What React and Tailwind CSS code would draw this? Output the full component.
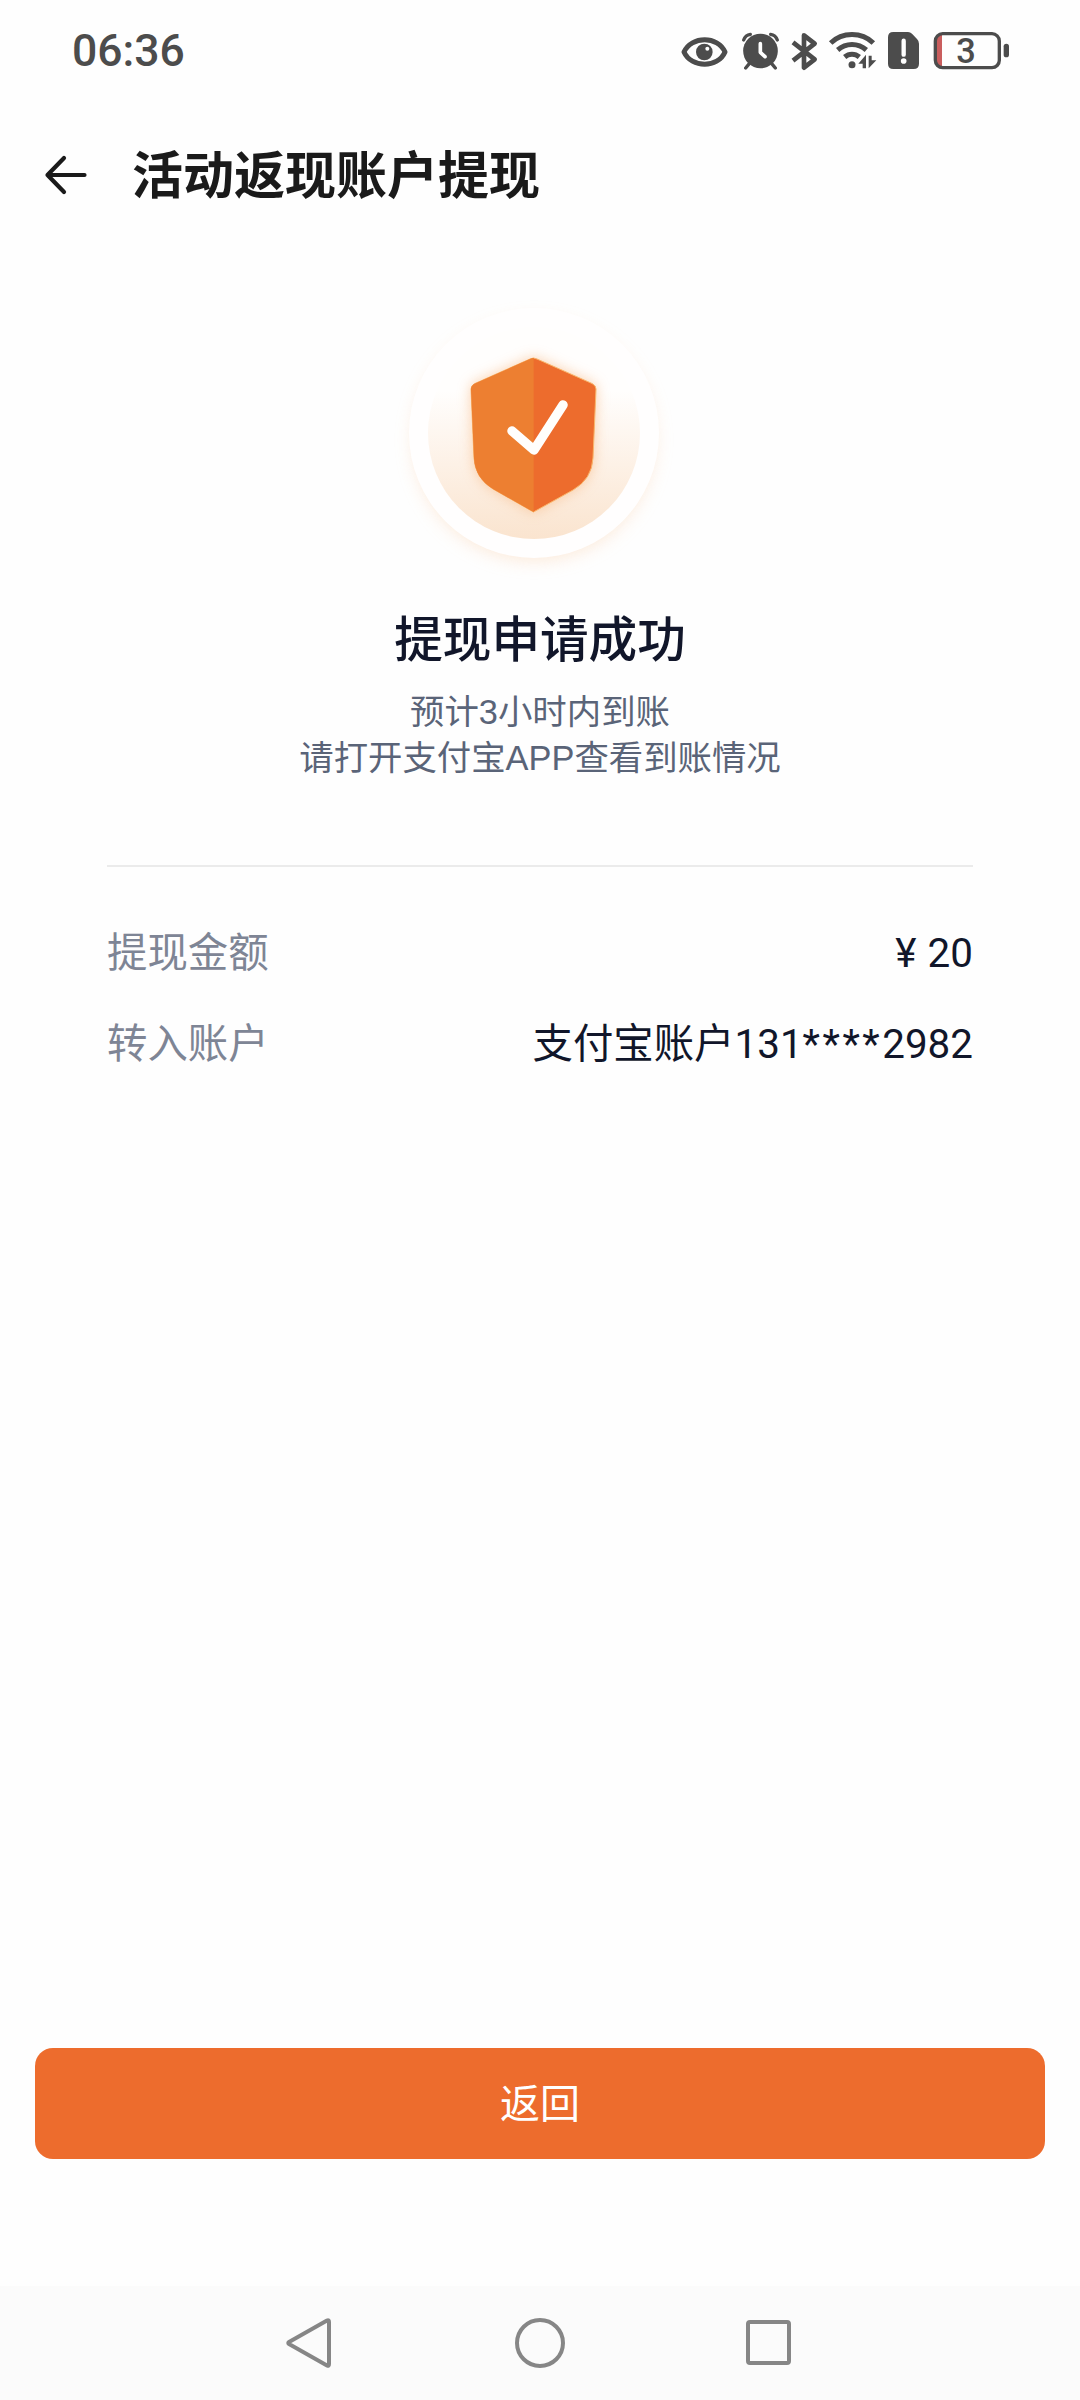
import React from 'react';

const EyeIcon = () => (
  <svg width="50" height="42" viewBox="60 60 150 126">
    <path
      d="M72 126 C94 77 174 77 195 126 C174 175 94 175 72 126 Z"
      fill="none"
      stroke="#4c4c4c"
      strokeWidth="15"
      strokeLinejoin="round"
    />
    <circle cx="133" cy="126" r="25" fill="#4c4c4c" />
    <circle cx="142" cy="116" r="6" fill="#fefefe" />
  </svg>
);

const AlarmIcon = () => (
  <svg width="42" height="42" viewBox="240 60 126 126">
    <g fill="none" stroke="#4c4c4c" strokeLinecap="round">
      <path d="M251 90 C255 79 262 74 271 73" strokeWidth="10" />
      <path d="M352 90 C348 79 341 74 332 73" strokeWidth="10" />
      <path d="M266 163 L257 174 M337 163 L346 174" strokeWidth="10" />
    </g>
    <circle cx="301.500" cy="123" r="52" fill="#4c4c4c" />
    <path d="M301 101 V127 L315 140" fill="none" stroke="#fefefe" strokeWidth="11" strokeLinecap="round" strokeLinejoin="round" />
  </svg>
);

const BluetoothIcon = () => (
  <svg width="28" height="42" viewBox="390 60 84 126">
    <path
      d="M399 97 L464 148 L432 173 V76 L464 101 L399 152"
      fill="none"
      stroke="#4c4c4c"
      strokeWidth="14"
      strokeLinejoin="round"
    />
  </svg>
);

const WifiIcon = () => (
  <svg width="50" height="42" viewBox="504 60 150 126">
    <g fill="none" stroke="#4c4c4c" strokeWidth="15">
      <path d="M512 99 C547 65 605 65 640 99" />
      <path d="M533 120 C558 98 594 98 619 120" />
      <path d="M554 141 C567 130 585 130 598 141" />
    </g>
    <circle cx="576" cy="164" r="10.500" fill="#4c4c4c" />
    <path d="M618 134 V175 H608 V161 H595 Z" fill="#4c4c4c" />
    <path d="M626 175 V137 H635 V151 H649 Z" fill="#4c4c4c" />
  </svg>
);

const SimAlertIcon = () => (
  <svg width="35" height="42" viewBox="678 60 105 126">
    <path
      d="M700 66 H744 Q751 66 756 71 L771 87 Q777 93 777 101 V161 Q777 177 761 177 H700 Q684 177 684 161 V82 Q684 66 700 66 Z"
      fill="#4c4c4c"
    />
    <path d="M731 92 V134" stroke="#fefefe" strokeWidth="13" strokeLinecap="round" />
    <circle cx="731" cy="153" r="8.500" fill="#fefefe" />
  </svg>
);

const BatteryIcon = () => (
  <svg width="78" height="42" viewBox="816 60 234 126">
    <path d="M846 75 V169 H842 Q830 169 830 155 V89 Q830 75 842 75 Z" fill="#c95d5d" />
    <rect x="826" y="71" width="192" height="102" rx="22" fill="none" stroke="#4c4c4c" strokeWidth="10" />
    <rect x="1031" y="101" width="16" height="41" rx="8" fill="#4c4c4c" />
    <text x="918" y="158" textAnchor="middle" fontSize="103" fontWeight="500" fill="#4c4c4c" className="font-[Roboto,sans-serif]">
      3
    </text>
  </svg>
);

const ShieldBadge = () => (
  <svg width="320" height="320" viewBox="0 0 320 320">
    <defs>
      <linearGradient id="disc" x1="0" y1="0" x2="0" y2="1">
        <stop offset="0.3" stopColor="#fffefd" />
        <stop offset="0.65" stopColor="#fdf1e6" />
        <stop offset="1" stopColor="#fae4cf" />
      </linearGradient>
      <filter id="halo" x="-30%" y="-30%" width="160%" height="160%">
        <feGaussianBlur stdDeviation="9" />
      </filter>
      <filter id="glow" x="-30%" y="-30%" width="160%" height="160%">
        <feGaussianBlur stdDeviation="7" />
      </filter>
      <clipPath id="leftHalf">
        <rect x="80" y="70" width="73.700" height="170" />
      </clipPath>
    </defs>
    <circle cx="154" cy="160" r="120" fill="#fbdfc6" opacity="0.7" filter="url(#halo)" />
    <circle cx="154" cy="153" r="125" fill="#fffefe" />
    <circle cx="154" cy="153" r="106" fill="url(#disc)" />
    <path
      d="M150 79 Q153.500 77 157 79 L212 103.500 Q216 105.500 216 109 L213 178 Q212 199 193 210 L153.500 232 L113 209 Q95 198 94 178 L91 109 Q91 105.500 95 103.500 Z"
      fill="#f8b985"
      opacity="0.7"
      filter="url(#glow)"
    />
    <path
      d="M150 79 Q153.500 77 157 79 L212 103.500 Q216 105.500 216 109 L213 178 Q212 199 193 210 L153.500 232 L113 209 Q95 198 94 178 L91 109 Q91 105.500 95 103.500 Z"
      fill="#ed6c2d"
      stroke="#f9b66c"
      strokeWidth="1"
    />
    <path
      d="M150 79 Q153.500 77 157 79 L212 103.500 Q216 105.500 216 109 L213 178 Q212 199 193 210 L153.500 232 L113 209 Q95 198 94 178 L91 109 Q91 105.500 95 103.500 Z"
      fill="#ed7f31"
      clipPath="url(#leftHalf)"
    />
    <path d="M132 151 L154 170 L183 125" fill="none" stroke="#fffefc" strokeWidth="9.500" strokeLinecap="round" strokeLinejoin="round" />
  </svg>
);

const App = () => {
  return (
    <div className="flex h-[2400px] w-[1080px] flex-col overflow-hidden bg-[#fefefe] font-[Roboto,'Noto_Sans_CJK_SC',sans-serif]">
      {/* Status bar */}
      <div className="flex h-[102px] items-center justify-between pl-[72px] pr-[70px]">
        <span className="text-[44.5px] leading-none font-medium text-[#4c4c4c]">06:36</span>
        <div className="flex items-center">
          <EyeIcon />
          <div className="ml-[10px]"><AlarmIcon /></div>
          <div className="ml-2"><BluetoothIcon /></div>
          <div className="ml-[10px]"><WifiIcon /></div>
          <div className="ml-2"><SimAlertIcon /></div>
          <div className="ml-[11px]"><BatteryIcon /></div>
        </div>
      </div>

      {/* Header */}
      <header className="flex h-[146px] items-center pl-[44px]">
        <svg width="44" height="44" viewBox="0 0 44 44" fill="none" stroke="#1a1a1a" strokeWidth="4.200" strokeLinecap="round" strokeLinejoin="round">
          <path d="M20 5 L3.500 22 L20 39 M3.500 22 H40.500" />
        </svg>
        <h1 className="ml-[44px] pt-[3px] text-[51px] leading-none font-bold text-[#1a1a1a]">活动返现账户提现</h1>
      </header>

      {/* Result */}
      <section className="flex flex-col items-center pt-8">
        <ShieldBadge />
        <h2 className="mt-[13px] text-[48.6px] leading-[56px] font-medium text-[#11162a]">提现申请成功</h2>
        <p className="mt-5 text-center font-['Liberation_Sans','Noto_Sans_CJK_SC',sans-serif] text-[34.4px] leading-[46px] text-[#5a6478]">
          预计3小时内到账
          <br />
          请打开支付宝APP查看到账情况
        </p>
      </section>

      {/* Details */}
      <section className="mx-[107px] mt-[84px] border-t-2 border-[#ebebeb] pt-[42px] text-[40.4px]">
        <div className="flex h-[91px] items-center justify-between">
          <span className="text-[#7e8595]">提现金额</span>
          <span className="flex gap-[11px] text-[#11162a]">
            <span>¥</span>
            <span>20</span>
          </span>
        </div>
        <div className="flex h-[91px] items-center justify-between">
          <span className="text-[#7e8595]">转入账户</span>
          <span className="text-[#11162a]">
            支付宝账户131<span className="tracking-[2.5px]">****</span>2982
          </span>
        </div>
      </section>

      {/* Bottom action */}
      <div className="mt-auto px-[35px] pb-[127px]">
        <button className="flex h-[111px] w-full items-center justify-center rounded-[18px] bg-[#ed6c2d] pt-[3px] text-[40px] text-white">
          返回
        </button>
      </div>

      {/* System navigation */}
      <nav className="flex h-[114px] items-center justify-center gap-[179px] bg-[#fbfbfb]">
        <svg width="50" height="50" viewBox="0 0 50 50" fill="none" stroke="#868686" strokeWidth="4" strokeLinejoin="round">
          <path d="M41 2.500 Q43 1.500 43 4 V46 Q43 48.500 41 47.500 L3 26 Q1.500 25 3 24 Z" />
        </svg>
        <svg width="50" height="50" viewBox="0 0 50 50" fill="none" stroke="#868686" strokeWidth="4">
          <circle cx="25" cy="25" r="23" />
        </svg>
        <svg width="50" height="50" viewBox="0 0 50 50" fill="none" stroke="#868686" strokeWidth="4">
          <rect x="4" y="4" width="41" height="41" rx="2" />
        </svg>
      </nav>
    </div>
  );
};

export default App;
